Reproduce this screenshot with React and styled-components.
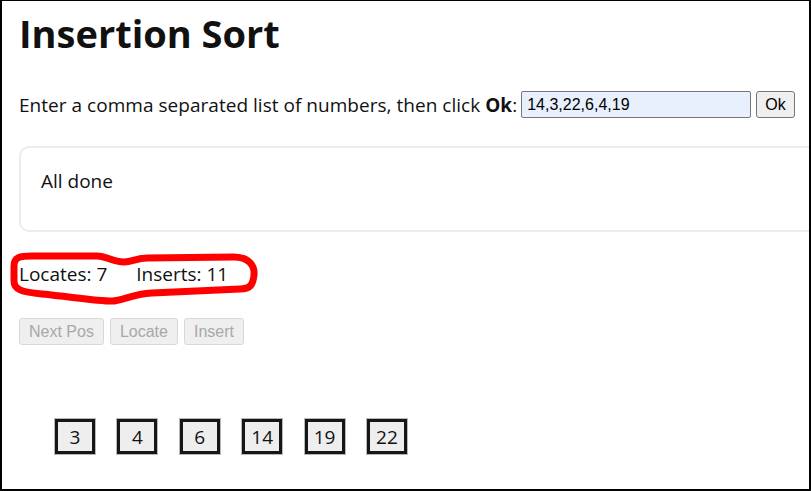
import React from "react";
import styled, { createGlobalStyle } from "styled-components";

const GlobalStyle = createGlobalStyle`
  html, body {
    margin: 0;
    padding: 0;
    background: #fff;
  }
  body {
    font-family: "Open Sans", "DejaVu Sans", sans-serif;
    color: #111;
  }
`;

const sorted = [3, 4, 6, 14, 19, 22];

export default function App() {
  return (
    <>
      <GlobalStyle />
      <Frame>
        <Title>Insertion Sort</Title>
        <PromptRow>
          <PromptText>
            Enter a comma separated list of numbers, then click <b>Ok</b>:
          </PromptText>
          <NumberInput defaultValue="14,3,22,6,4,19" />
          <OkButton>Ok</OkButton>
        </PromptRow>
        <MessageCard>All done</MessageCard>
        <Stats>
          <span>Locates: 7</span>
          <span>Inserts: 11</span>
        </Stats>
        <ButtonRow>
          <StepButton disabled>Next Pos</StepButton>
          <StepButton disabled>Locate</StepButton>
          <StepButton disabled>Insert</StepButton>
        </ButtonRow>
        <BoxRow>
          {sorted.map((n) => (
            <NumberBox key={n}>{n}</NumberBox>
          ))}
        </BoxRow>
        {/* hand-drawn highlight around the counters */}
        <Scribble viewBox="0 240 270 70" aria-hidden="true">
          <path d="M12 265 C12 256 18 255 30 255 L95 255 C105 255 110 261 122 261 C130 261 135 257 145 257 L232 256 C246 256 253 264 252 274 C251 284 248 288 238 288 L150 292 C130 293 120 300 110 300 C95 300 70 296 40 293 C20 291 12 289 12 280 Z" />
        </Scribble>
      </Frame>
    </>
  );
}

const Frame = styled.div`
  position: relative;
  box-sizing: border-box;
  width: 811px;
  height: 491px;
  padding: 0 17px;
  border-top: 1px solid #000;
  border-left: 2px solid #000;
  border-right: 2px solid #000;
  border-bottom: 2px solid #000;
  overflow: hidden;
  background: #fff;
`;

const Title = styled.h1`
  margin: 6px 0 0;
  font-size: 38px;
  line-height: 52px;
  font-weight: 700;
`;

const PromptRow = styled.div`
  display: flex;
  align-items: center;
  margin-top: 32px;
  height: 27px;
  font-size: 19px;
`;

const PromptText = styled.span`
  flex-shrink: 0;
  white-space: nowrap;
  letter-spacing: 0.03px;

  b {
    font-weight: 700;
  }
`;

const NumberInput = styled.input`
  box-sizing: border-box;
  flex-shrink: 0;
  width: 230px;
  height: 27px;
  margin-left: 4px;
  padding: 1px 5px;
  font-family: "Liberation Sans", Arial, sans-serif;
  font-size: 16px;
  color: #000;
  background: #e8f0fe;
  border: 1px solid #767676;
  border-radius: 2px;
`;

const OkButton = styled.button`
  box-sizing: border-box;
  flex-shrink: 0;
  height: 27px;
  margin-left: 5px;
  padding: 0 8px;
  font-family: "Liberation Sans", Arial, sans-serif;
  font-size: 16px;
  color: #000;
  background: #efefef;
  border: 1px solid #767676;
  border-radius: 3px;
`;

const MessageCard = styled.div`
  box-sizing: border-box;
  width: calc(100% + 60px);
  height: 86px;
  margin-top: 28px;
  padding: 21px 20px 0;
  font-size: 19px;
  line-height: 24px;
  border: 2px solid #ececec;
  border-radius: 10px;
`;

const Stats = styled.div`
  display: flex;
  gap: 29px;
  margin-top: 30px;
  font-size: 19px;
  line-height: 24px;
`;

const ButtonRow = styled.div`
  display: flex;
  gap: 6px;
  margin-top: 32px;
`;

const StepButton = styled.button`
  box-sizing: border-box;
  height: 27px;
  padding: 0 9px;
  font-family: "Liberation Sans", Arial, sans-serif;
  font-size: 16px;
  color: #a8a8a8;
  background: #efefef;
  border: 1px solid #d8d8d8;
  border-radius: 3px;
`;

const BoxRow = styled.div`
  display: flex;
  gap: 22.4px;
  margin-top: 74px;
  padding-left: 36px;
`;

const NumberBox = styled.div`
  box-sizing: border-box;
  width: 40px;
  height: 35px;
  display: flex;
  align-items: center;
  justify-content: center;
  font-size: 19px;
  background: #eee;
  border: 3px solid #161616;
  box-shadow: 0 0 0 1px #b8b8b8;
`;

const Scribble = styled.svg`
  position: absolute;
  left: 0;
  top: 240px;
  width: 270px;
  height: 70px;
  overflow: visible;
  pointer-events: none;

  path {
    fill: none;
    stroke: #f00;
    stroke-width: 7;
    stroke-linejoin: round;
  }
`;
